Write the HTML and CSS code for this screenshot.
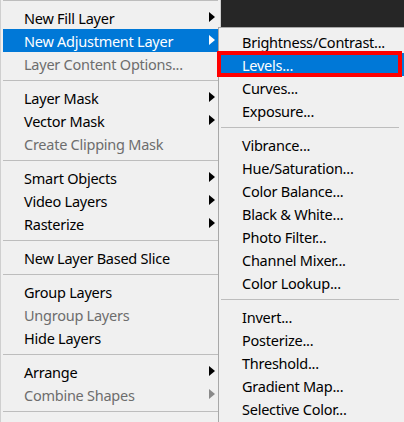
FILE: index.html
```html
<!DOCTYPE html>
<html lang="en">
<head>
    <meta charset="UTF-8">
    <meta name="viewport" content="width=device-width, initial-scale=1.0">
    <title>Layer Menu</title>
    <link rel="stylesheet" href="styles.css">
</head>
<body>

<div class="screen">
    <!-- Main layer menu -->
    <div class="menu main-menu">
        <div class="sep first"></div>
        <div class="item sub">New Fill Layer</div>
        <div class="item sub active">New Adjustment Layer</div>
        <div class="item disabled">Layer Content Options...</div>
        <div class="sep"></div>
        <div class="item sub">Layer Mask</div>
        <div class="item sub">Vector Mask</div>
        <div class="item disabled">Create Clipping Mask</div>
        <div class="sep"></div>
        <div class="item sub">Smart Objects</div>
        <div class="item sub">Video Layers</div>
        <div class="item sub">Rasterize</div>
        <div class="sep"></div>
        <div class="item">New Layer Based Slice</div>
        <div class="sep"></div>
        <div class="item">Group Layers</div>
        <div class="item disabled">Ungroup Layers</div>
        <div class="item">Hide Layers</div>
        <div class="sep"></div>
        <div class="item sub">Arrange</div>
        <div class="item sub disabled">Combine Shapes</div>
        <div class="sep"></div>
    </div>

    <!-- Adjustment submenu -->
    <div class="menu submenu">
        <div class="item">Brightness/Contrast...</div>
        <div class="item active">Levels...</div>
        <div class="item">Curves...</div>
        <div class="item">Exposure...</div>
        <div class="sep"></div>
        <div class="item">Vibrance...</div>
        <div class="item">Hue/Saturation...</div>
        <div class="item">Color Balance...</div>
        <div class="item">Black &amp; White...</div>
        <div class="item">Photo Filter...</div>
        <div class="item">Channel Mixer...</div>
        <div class="item">Color Lookup...</div>
        <div class="sep"></div>
        <div class="item">Invert...</div>
        <div class="item">Posterize...</div>
        <div class="item">Threshold...</div>
        <div class="item">Gradient Map...</div>
        <div class="item">Selective Color...</div>
        <div class="mark"></div>
    </div>
</div>

</body>
</html>
```

FILE: styles.css
```css
html, body {
    margin: 0;
    padding: 0;
}
body {
    background: #262626;
    font-family: "Noto Sans", "Open Sans", sans-serif;
    font-size: 14.5px;
    letter-spacing: -0.25px;
    color: #000;
}
.screen {
    position: relative;
    width: 404px;
    height: 422px;
    overflow: hidden;
}
.menu {
    background: #f0f0f0;
    box-sizing: border-box;
}
.main-menu {
    width: 221px;
    height: 422px;
    border-left: 1px solid #cfcfcf;
    border-right: 1px solid #cfcfcf;
    padding: 0 2px;
}
.item {
    position: relative;
    height: 23px;
    line-height: 23px;
    padding-top: 1px;
    box-sizing: border-box;
    padding-left: 21px;
    white-space: nowrap;
}
.item.active {
    background: #0078d7;
    color: #fff;
}
.item.disabled {
    color: #6d6d6d;
}
.sep {
    height: 11px;
    position: relative;
}
.sep::before {
    content: "";
    position: absolute;
    left: 0;
    right: 0;
    top: 5px;
    border-top: 1px solid #bdbdbd;
}
.sep.first {
    height: 6px;
}
.sep.first::before {
    top: 0;
}
.item.sub::after {
    content: "";
    position: absolute;
    right: 3px;
    top: 6px;
    border-left: 6px solid #000;
    border-top: 5px solid transparent;
    border-bottom: 5px solid transparent;
}
.item.sub.active::after {
    border-left-color: #fff;
}
.item.sub.disabled::after {
    border-left-color: #8a8a8a;
}
.submenu {
    position: absolute;
    left: 218px;
    top: 27px;
    width: 192px;
    height: 420px;
    border: 1px solid #a8a8a8;
    padding: 2px 2px;
}
.submenu .sep::before {
    right: 8px;
}
.submenu .mark {
    position: absolute;
    left: -2px;
    top: 23px;
    width: 185px;
    height: 26px;
    border: 4px solid #ff0000;
    box-sizing: border-box;
}
```
